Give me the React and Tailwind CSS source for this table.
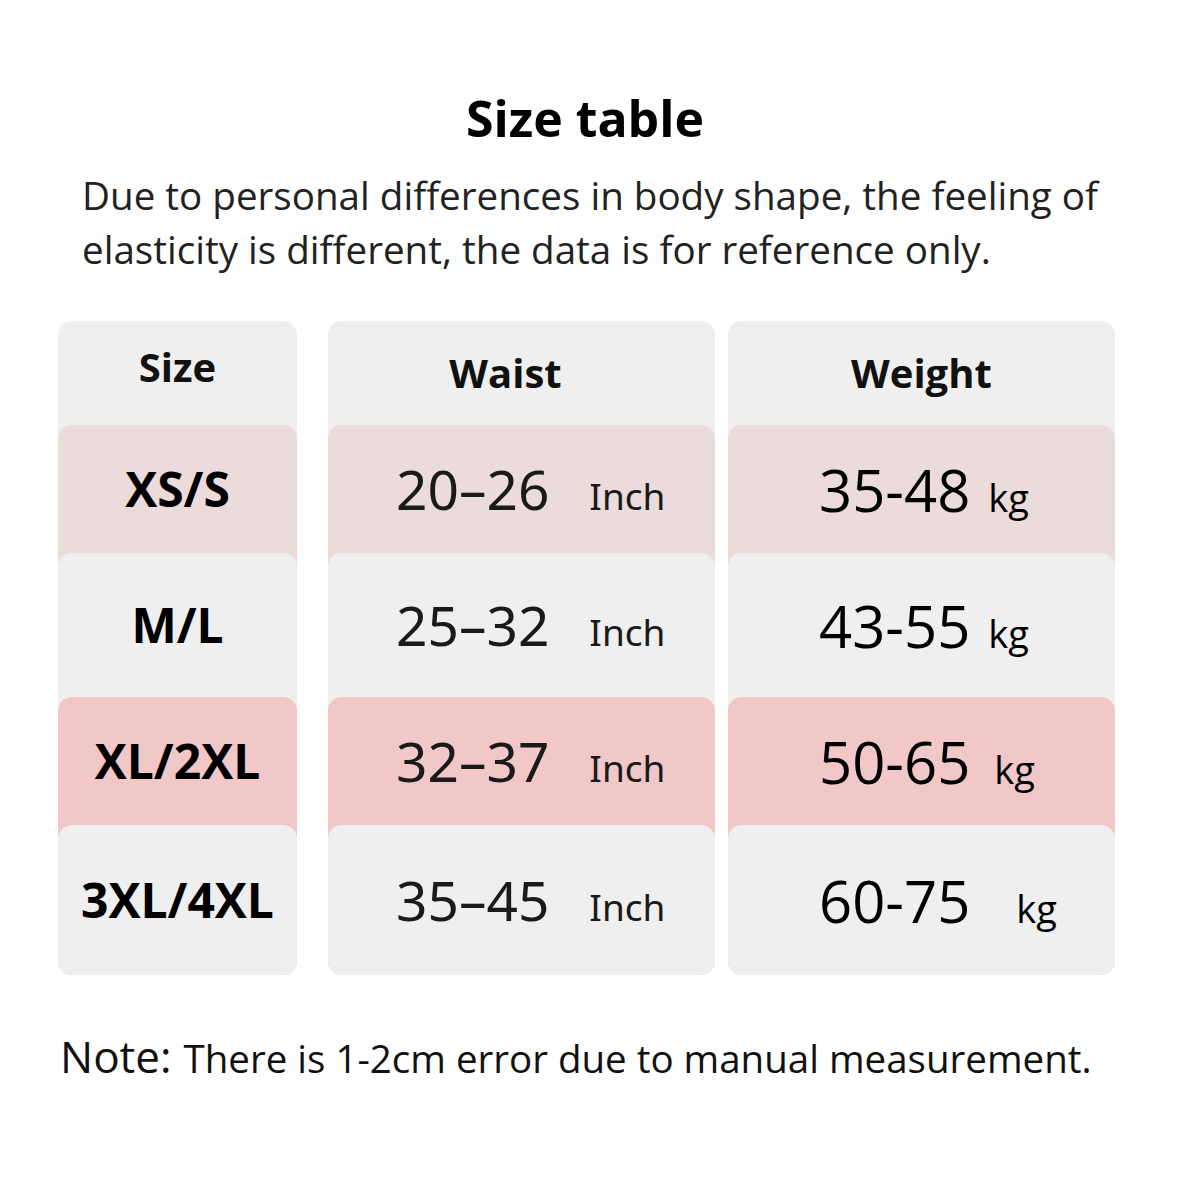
const GREY = "bg-[#efefef]"
const LIGHT = "bg-[#ecdbdb]"
const PINK = "bg-[#f1c7c8]"

const rows = [
    { size: "XS/S", waist: "20–26", weight: "35-48", kgGap: "ml-[18px]", bg: LIGHT, prev: GREY, h: "h-[128px]" },
    { size: "M/L", waist: "25–32", weight: "43-55", kgGap: "ml-[18px]", bg: GREY, prev: LIGHT, h: "h-[144px]" },
    { size: "XL/2XL", waist: "32–37", weight: "50-65", kgGap: "ml-[24px]", bg: PINK, prev: GREY, h: "h-[128px]" },
    { size: "3XL/4XL", waist: "35–45", weight: "60-75", kgGap: "ml-[46px]", bg: GREY, prev: PINK, h: "h-[150px]" },
]

function Cell({ bg, prev, h, align, children }) {
    return (
        <div className={`${prev} ${h}`}>
            <div className={`${bg} h-full rounded-t-[14px] flex items-center ${align}`}>{children}</div>
        </div>
    )
}

function Column({ width, title, titleClass, align, render }) {
    return (
        <div className={`${width} flex flex-col rounded-[14px] overflow-hidden ${GREY}`}>
            <div className={`h-[104px] flex items-center justify-center text-[40px] font-bold text-[#111] ${titleClass}`}>{title}</div>
            {rows.map((r) => (
                <Cell key={r.size} bg={r.bg} prev={r.prev} h={r.h} align={align}>
                    {render(r)}
                </Cell>
            ))}
        </div>
    )
}

export default function App() {
    return (
        <main className="w-[1200px] h-[1200px] bg-white text-black" style={{ fontFamily: "'Open Sans', 'Noto Sans', sans-serif" }}>
            <h1 className="pt-[84px] text-center text-[50px] font-bold leading-[68px] pr-[30px]">Size table</h1>
            <p className="mt-[16px] pl-[82px] text-[38.6px] leading-[54px] text-[#222] whitespace-nowrap">
                Due to personal differences in body shape, the feeling of
                <br />
                elasticity is different, the data is for reference only.
            </p>

            <div className="mt-[45px] ml-[58px] flex">
                <Column
                    width="w-[239px]"
                    title="Size"
                    titleClass="pb-[12px]"
                    align="justify-center"
                    render={(r) => <span className="text-[48px] font-bold">{r.size}</span>}
                />
                <div className="w-[31px]" />
                <Column
                    width="w-[387px]"
                    title="Waist"
                    titleClass="pr-[32px]"
                    align="justify-start pl-[68px]"
                    render={(r) => (
                        <span className="flex items-baseline text-[#1a1a1a]" style={{ fontFamily: "'Noto Sans', sans-serif" }}>
                            <span className="text-[55px]">{r.waist}</span>
                            <span className="ml-[40px] text-[37px]">Inch</span>
                        </span>
                    )}
                />
                <div className="w-[13px]" />
                <Column
                    width="w-[387px]"
                    title="Weight"
                    titleClass=""
                    align="justify-start pl-[91px]"
                    render={(r) => (
                        <span className="flex items-baseline">
                            <span className="text-[58px]">{r.weight}</span>
                            <span className={`${r.kgGap} text-[38px]`}>kg</span>
                        </span>
                    )}
                />
            </div>

            <p className="mt-[48px] pl-[60px] text-[38.5px] text-[#111] flex items-baseline whitespace-nowrap">
                <span className="text-[44px]">Note:</span>
                <span className="ml-[12px]">There is 1-2cm error due to manual measurement.</span>
            </p>
        </main>
    )
}
